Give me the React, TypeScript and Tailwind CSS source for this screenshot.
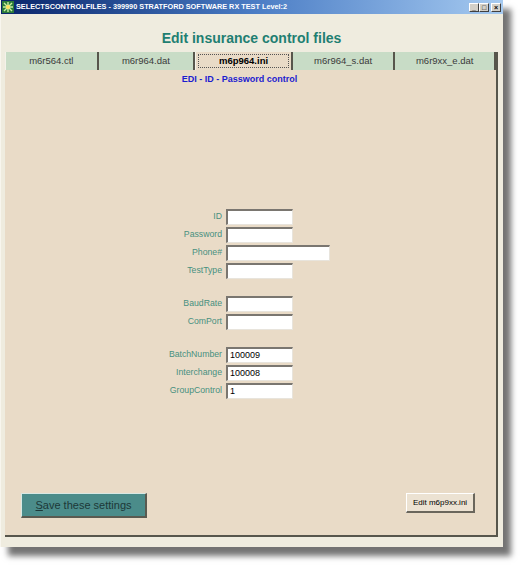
import React from 'react'

const TABS = [
  { label: 'm6r564.ctl', w: 'w-[93px]' },
  { label: 'm6r964.dat', w: 'w-[97px]' },
  { label: 'm6p964.ini', w: 'w-[98px]', active: true },
  { label: 'm6r964_s.dat', w: 'w-[103px]' },
  { label: 'm6r9xx_e.dat', w: 'w-[101px]' },
]

type Field = { label: string; value?: string; wide?: boolean }

const GROUPS: Field[][] = [
  [{ label: 'ID' }, { label: 'Password' }, { label: 'Phone#', wide: true }, { label: 'TestType' }],
  [{ label: 'BaudRate' }, { label: 'ComPort' }],
  [
    { label: 'BatchNumber', value: '100009' },
    { label: 'Interchange', value: '100008' },
    { label: 'GroupControl', value: '1' },
  ],
]

function TitleButton({ children }: { children: React.ReactNode }) {
  return (
    <div className="w-[10px] h-[9px] bg-[#d4d0c8] border-t border-l border-white border-r border-b border-r-[#404040] border-b-[#404040] flex items-center justify-center text-[7px] leading-none font-bold text-black">
      {children}
    </div>
  )
}

function FormRow({ field }: { field: Field }) {
  return (
    <div className="flex items-center h-[16px]">
      <div className="w-[221px] pr-[4px] text-right text-[8.7px] text-[#47907f]">{field.label}</div>
      <div
        className={`${field.wide ? 'w-[104px]' : 'w-[67px]'} h-[16px] bg-white border-t-2 border-l-2 border-t-[#7a7670] border-l-[#7a7670] border-b border-r border-b-[#e8e4dc] border-r-[#e8e4dc] pl-[2px] text-[9px] leading-[13px] text-black`}
      >
        {field.value}
      </div>
    </div>
  )
}

export default function App() {
  return (
    <div className="w-[521px] h-[566px] bg-white" style={{ fontFamily: '"Liberation Sans", Arial, sans-serif' }}>
      <div className="w-[503px] bg-[#efecdf] shadow-[8px_9px_6px_rgba(0,0,0,0.55)] border-l border-[#f8f6ee]">
        {/* title bar */}
        <div className="h-[14px] flex items-center bg-gradient-to-r from-[#0a246a] via-[#4a7cc4] to-[#a6caf0] pl-[1px] pr-[2px]">
          <svg width="12" height="12" viewBox="0 0 12 12" className="shrink-0">
            <rect width="12" height="12" fill="#2c7a3a" />
            <path d="M1 6 L11 6 M6 1 L6 11 M2 2 L10 10 M10 2 L2 10" stroke="#c8f0a0" strokeWidth="1.4" />
            <circle cx="6" cy="6" r="2" fill="#ffe060" />
          </svg>
          <span className="ml-[2px] text-[7.3px] font-bold text-white whitespace-nowrap">
            SELECTSCONTROLFILES - 399990 STRATFORD SOFTWARE RX TEST Level:2
          </span>
          <div className="ml-auto flex items-center">
            <TitleButton>_</TitleButton>
            <TitleButton>□</TitleButton>
            <div className="w-[2px]" />
            <TitleButton>×</TitleButton>
          </div>
        </div>

        <div className="pl-[4px] pr-[5px] pb-[10px]">
          <div className="mt-[14px] h-[24px] leading-[20px] text-center text-[14px] font-bold text-[#1f7f72]">
            Edit insurance control files
          </div>

          <div className="h-[485px] w-[493px] bg-[#e9dbc7] border-r-2 border-b-2 border-[#57564c] flex flex-col">
            {/* tabs */}
            <div className="flex h-[18px] border-l border-[#f4f2ea]">
              {TABS.map((t) =>
                t.active ? (
                  <div
                    key={t.label}
                    className={`${t.w} h-[18px] bg-[#e9dbc7] border-l border-[#f4f2ea] border-r-2 border-r-[#57564c] p-[2px]`}
                  >
                    <div className="h-full border border-dotted border-[#555] flex items-center justify-center text-[9.5px] font-bold text-black">
                      {t.label}
                    </div>
                  </div>
                ) : (
                  <div
                    key={t.label}
                    className={`${t.w} h-[18px] bg-[#c8dcc6] border-r-2 border-[#57564c] flex items-center justify-center text-[9.5px] text-[#3a3a3a]`}
                  >
                    {t.label}
                  </div>
                ),
              )}
            </div>

            <div className="mt-[3px] pr-[22px] leading-[12px] text-center text-[9px] font-bold text-[#1c1cd0]">
              EDI - ID - Password control
            </div>

            {/* form */}
            <div className="mt-[124px] flex flex-col gap-[17px]">
              {GROUPS.map((g, i) => (
                <div key={i} className="flex flex-col gap-[2px]">
                  {g.map((f) => (
                    <FormRow key={f.label} field={f} />
                  ))}
                </div>
              ))}
            </div>

            <div className="flex-1" />

            <div className="flex items-start justify-between pl-[16px] pr-[21px] pb-[17px]">
              <button className="w-[126px] h-[25px] bg-[#4b8c8a] border-t border-l border-t-[#d8e8e4] border-l-[#d8e8e4] border-b-2 border-r-2 border-b-[#5a5a50] border-r-[#5a5a50] text-[11px] text-[#1c3838]">
                <span className="underline">S</span>ave these settings
              </button>
              <button className="w-[69px] h-[20px] bg-[#ece2d2] border-t border-l border-white border-b-2 border-r-2 border-b-[#6a665c] border-r-[#6a665c] text-[8px] text-black">
                Edit m6p9xx.ini
              </button>
            </div>
          </div>
        </div>
      </div>
    </div>
  )
}
